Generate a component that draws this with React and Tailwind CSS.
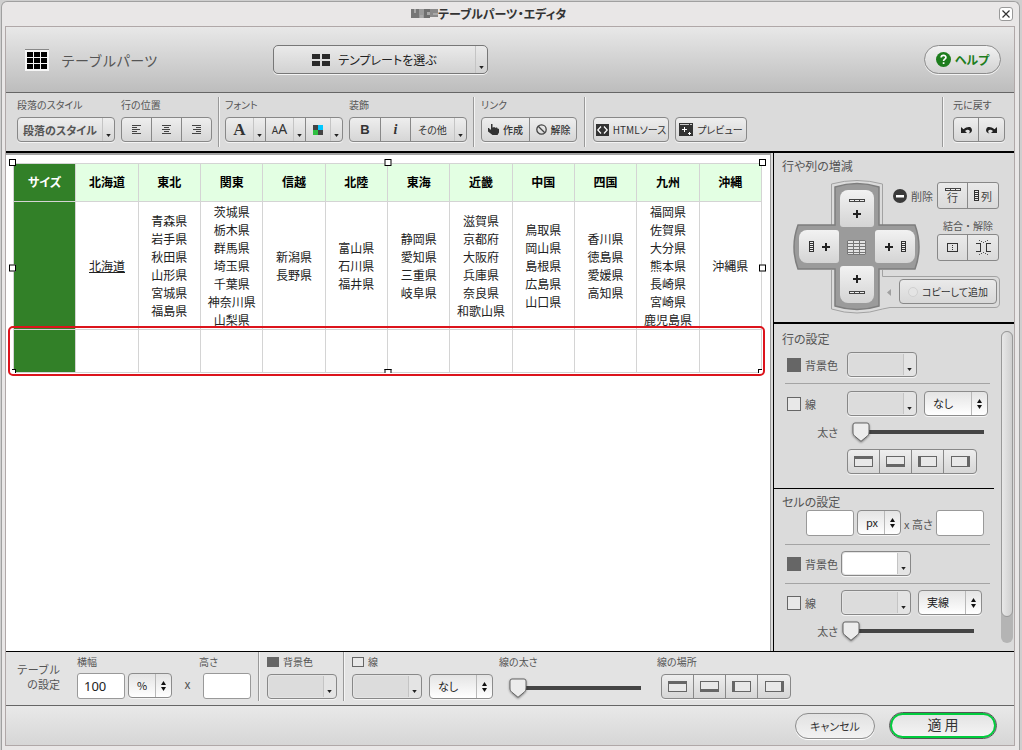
import { useState } from "react";

const regions = [
  { name: "北海道", prefs: ["北海道"], link: true },
  { name: "東北", prefs: ["青森県", "岩手県", "秋田県", "山形県", "宮城県", "福島県"] },
  { name: "関東", prefs: ["茨城県", "栃木県", "群馬県", "埼玉県", "千葉県", "神奈川県", "山梨県"] },
  { name: "信越", prefs: ["新潟県", "長野県"] },
  { name: "北陸", prefs: ["富山県", "石川県", "福井県"] },
  { name: "東海", prefs: ["静岡県", "愛知県", "三重県", "岐阜県"] },
  { name: "近畿", prefs: ["滋賀県", "京都府", "大阪府", "兵庫県", "奈良県", "和歌山県"] },
  { name: "中国", prefs: ["鳥取県", "岡山県", "島根県", "広島県", "山口県"] },
  { name: "四国", prefs: ["香川県", "徳島県", "愛媛県", "高知県"] },
  { name: "九州", prefs: ["福岡県", "佐賀県", "大分県", "熊本県", "長崎県", "宮崎県", "鹿児島県"] },
  { name: "沖縄", prefs: ["沖縄県"] },
];

const handles = [
  "size-[7px] -left-1 -top-1",
  "size-[7px] left-1/2 -top-1 -translate-x-1/2",
  "size-[7px] -right-1 -top-1",
  "size-[7px] -left-1 top-1/2 -translate-y-1/2",
  "size-[7px] -right-1 top-1/2 -translate-y-1/2",
  "size-1 border-b-0 border-l-0 -left-px bottom-0",
  "h-1 w-[7px] border-b-0 left-1/2 bottom-0 -translate-x-1/2",
  "size-1 border-b-0 border-r-0 right-0 bottom-0",
];

function Caret() {
  return (
    <svg className="mb-1" width="5" height="3" viewBox="0 0 6 4" aria-hidden="true">
      <path d="M0 0h6L3 4z" fill="#222" />
    </svg>
  );
}

function CaretCell() {
  return (
    <span className="flex w-3 items-end justify-center self-stretch border-l border-[#c4c4c4]">
      <Caret />
    </span>
  );
}

function Group({ children }) {
  return (
    <div className="flex h-[25px] w-max divide-x divide-[#888] overflow-hidden rounded-[4px] border border-[#888] bg-linear-to-b from-[#eeeeee] to-[#d6d6d6] text-[#333] shadow-[0_1px_0_#f4f4f4]">
      {children}
    </div>
  );
}

function Cell({ label, width, caret, children }) {
  return (
    <button type="button" aria-label={label} className={`flex items-center ${width}`}>
      <span className="flex flex-1 items-center justify-center gap-1 whitespace-nowrap">{children}</span>
      {caret && <CaretCell />}
    </button>
  );
}

function Tool({ label, className = "", children }) {
  return (
    <div className={`flex flex-col gap-1 ${className}`}>
      <span className="h-4 text-[10px] leading-4 whitespace-nowrap text-[#555]">{label}</span>
      {children}
    </div>
  );
}

function Divider() {
  return <div className="w-px self-stretch bg-[#999] shadow-[1px_0_0_#f4f4f4]" />;
}

function AlignIcon({ kind }) {
  const widths = [9, 5, 8, 5, 9];
  return (
    <svg width="9" height="10" viewBox="0 0 9 10" shapeRendering="crispEdges" aria-hidden="true">
      {widths.map((w, i) => {
        const x = kind === "left" ? 0 : kind === "right" ? 9 - w : Math.floor((9 - w) / 2);
        return <rect key={i} x={x} y={i * 2} width={w} height="1" fill="#444" />;
      })}
    </svg>
  );
}

function Swatch({ label, color = "bg-[#dcdcdc]" }) {
  return (
    <button
      type="button"
      aria-label={label}
      className="flex h-[25px] w-[70px] shrink-0 overflow-hidden rounded-[4px] border border-[#888] bg-[#e4e4e4] p-px shadow-[0_1px_0_#f4f4f4]"
    >
      <span className={`flex-1 self-stretch rounded-l-[3px] ${color}`} />
      <CaretCell />
    </button>
  );
}

function Picker({ label, options, width }) {
  return (
    <div className={`relative h-[25px] shrink-0 ${width}`}>
      <select
        aria-label={label}
        className="block h-full w-full appearance-none rounded-[4px] border border-[#8c8c8c] bg-linear-to-b from-[#e4e4e4] to-[#ffffff] pb-0.5 pl-2 text-[11px] leading-4 text-[#222] shadow-[0_1px_0_#f4f4f4]"
      >
        {options.map((o) => (
          <option key={o}>{o}</option>
        ))}
      </select>
      <span className="pointer-events-none absolute inset-y-px right-px flex w-4 items-center justify-center border-l border-[#b8b8b8]">
        <svg width="5" height="10" viewBox="0 0 5 10" aria-hidden="true">
          <path d="M2.500 0l2.500 4H0zM0 6h5L2.500 10z" fill="#111" />
        </svg>
      </span>
    </div>
  );
}

function Slider({ label }) {
  const [value, setValue] = useState(0);
  return (
    <div className="relative h-5 w-[132px] shrink-0">
      <input
        type="range"
        aria-label={label}
        min="0"
        max="100"
        value={value}
        onChange={(e) => setValue(Number(e.target.value))}
        className="block h-5 w-full appearance-none bg-linear-to-b from-[#444] to-[#444] bg-[length:calc(100%-8px)_4px] bg-right bg-no-repeat [&::-webkit-slider-thumb]:h-5 [&::-webkit-slider-thumb]:w-4 [&::-webkit-slider-thumb]:appearance-none [&::-webkit-slider-thumb]:bg-transparent"
      />
      <svg
        className="pointer-events-none absolute top-0 drop-shadow-[0_1px_1px_rgba(0,0,0,0.45)]"
        style={{ left: `${value * 1.14}px` }}
        width="18"
        height="20"
        viewBox="0 0 18 20"
        aria-hidden="true"
      >
        <path d="M3 1h12a2 2 0 0 1 2 2v7c0 2-.6 3-2 4.300L9 19.300l-6-5C1.600 13 1 12 1 10V3a2 2 0 0 1 2-2z" fill="#ececec" stroke="#666" />
      </svg>
    </div>
  );
}

function EdgeIcon({ side }) {
  const bars = {
    上: [0, 0, 19, 3],
    下: [0, 8, 19, 3],
    左: [0, 0, 3, 11],
    右: [16, 0, 3, 11],
  };
  const [x, y, w, h] = bars[side];
  return (
    <svg width="19" height="11" viewBox="0 0 19 11" shapeRendering="crispEdges" aria-hidden="true">
      <rect x="0.5" y="0.5" width="18" height="10" fill="#e8e8e8" stroke="#666" />
      <rect x={x} y={y} width={w} height={h} fill="#666" />
    </svg>
  );
}

function EdgeButtons() {
  return (
    <Group>
      {["上", "下", "左", "右"].map((side) => (
        <Cell key={side} label={`${side}の線`} width="w-8">
          <EdgeIcon side={side} />
        </Cell>
      ))}
    </Group>
  );
}

function Check({ label, on, small }) {
  return (
    <label className="flex items-center gap-1 text-[11px] leading-4 whitespace-nowrap text-[#555]">
      <input
        type="checkbox"
        defaultChecked={on}
        className={`appearance-none border border-[#666] bg-[#e8e8e8] checked:bg-[#666] ${small ? "h-2.5 w-3" : "size-3.5"}`}
      />
      <span className={small ? "text-[10px]" : ""}>{label}</span>
    </label>
  );
}

function SizeInput({ label, value = "" }) {
  return (
    <input
      type="text"
      aria-label={label}
      defaultValue={value}
      className="h-[26px] w-12 shrink-0 rounded-[3px] border border-[#999] bg-white px-1.5 font-['Noto_Sans',sans-serif] text-[13px] text-[#222]"
    />
  );
}

function TitleBar() {
  return (
    <div className="grid h-6 grid-cols-[10fr_auto_11fr] items-center pr-0.5">
      <span />
      <h1 className="flex items-center text-[12px] leading-4 font-bold text-[#333]">
        <svg width="27" height="11" viewBox="0 0 27 11" shapeRendering="crispEdges" aria-hidden="true">
          <path d="M0 0h8v9H0z" fill="#777" />
          <path d="M8 0h5v9H8z" fill="#9a9a9a" />
          <path d="M13 0h6v9h-6z" fill="#6f6f6f" />
          <path d="M19 0h8v8h-8z" fill="#8a8a8a" />
          <path d="M3 0h2v4H3zM9 6h3v3H9zM16 3h3v3h-3zM22 4h5v2h-5z" fill="#a8a8a8" />
        </svg>
        テーブルパーツ・エディタ
      </h1>
      <button type="button" aria-label="閉じる" className="flex size-3.5 items-center justify-center justify-self-end rounded-[3px] border border-[#999] bg-white">
        <svg width="8" height="8" viewBox="0 0 8 8" aria-hidden="true">
          <path d="M0.500 0.500l7 7M7.500 0.500l-7 7" stroke="#333" strokeWidth="1.200" />
        </svg>
      </button>
    </div>
  );
}

function Header() {
  return (
    <header className="flex h-[66px] items-center border-b border-[#666] bg-linear-to-b from-[#e8e8e8] to-[#bdbdbd] pr-[13px] pl-[19px]">
      <div className="flex w-[248px] items-center gap-3">
        <svg width="24" height="22" viewBox="0 0 24 22" shapeRendering="crispEdges" aria-hidden="true">
          <path d="M0 0h24v22H0z" fill="#f6f6f6" />
          <path d="M0 0h24v1H0z" fill="#888" />
          <path d="M2 3h20v17H2z" fill="#000" />
          <path d="M8 3h1v17H8zM15 3h1v17h-1zM2 8h20v1H2zM2 14h20v1H2z" fill="#f6f6f6" />
        </svg>
        <h2 className="text-[14px] leading-5 whitespace-nowrap text-[#555] [font-feature-settings:normal]">テーブルパーツ</h2>
      </div>
      <button
        type="button"
        className="flex h-[29px] w-[215px] items-center rounded-[5px] border border-[#777] bg-linear-to-b from-[#eaeaea] to-[#d2d2d2] shadow-[0_1px_0_#f4f4f4]"
      >
        <span className="flex flex-1 items-center justify-center gap-2 text-[12px] leading-4 text-[#222]">
          <svg width="18" height="12" viewBox="0 0 18 12" shapeRendering="crispEdges" aria-hidden="true">
            <path d="M0 0h8v5H0zM10 0h8v5h-8zM0 7h8v5H0zM10 7h8v5h-8z" fill="#2a2a2a" />
          </svg>
          テンプレートを選ぶ
        </span>
        <CaretCell />
      </button>
      <button
        type="button"
        className="ml-auto flex h-[29px] w-[77px] items-center justify-center gap-1 rounded-full border border-[#8c8c8c] bg-linear-to-b from-[#f2f2f2] to-[#d2d2d2] text-[12px] leading-4 font-bold text-[#1d7d1d] shadow-[0_1px_0_#f4f4f4]"
      >
        <svg width="15" height="15" viewBox="0 0 15 15" aria-hidden="true">
          <circle cx="7.500" cy="7.500" r="7.500" fill="#1d7d1d" />
          <path d="M5.200 5.600c0-3 4.700-3 4.700-.2 0 1.700-2.300 1.700-2.300 3.500M7.600 10.200v1.700" fill="none" stroke="#fff" strokeWidth="1.700" />
        </svg>
        ヘルプ
      </button>
    </header>
  );
}

function Toolbar() {
  return (
    <div className="flex h-[60px] border-b-2 border-black bg-[#dbdbdb] pt-1 pr-[9px] pb-1 pl-[11px] text-[11px] leading-4">
      <div className="flex flex-1 gap-1.5">
        <Tool label="段落のスタイル">
          <Group>
            <Cell width="w-24 font-bold text-[#555]" caret>段落のスタイル</Cell>
          </Group>
        </Tool>
        <Tool label="行の位置">
          <Group>
            <Cell label="左揃え" width="w-[30px]"><AlignIcon kind="left" /></Cell>
            <Cell label="中央揃え" width="w-[30px]"><AlignIcon kind="center" /></Cell>
            <Cell label="右揃え" width="w-[29px]"><AlignIcon kind="right" /></Cell>
          </Group>
        </Tool>
        <Divider />
        <Tool label="フォント">
          <Group>
            <Cell label="書体" width="w-10" caret>
              <span className="font-['Liberation_Serif',serif] text-[17px] font-bold">A</span>
            </Cell>
            <Cell label="文字サイズ" width="w-10" caret>
              <span className="font-['Noto_Sans',sans-serif] text-[10px] leading-4">
                A<span className="text-[14px]">A</span>
              </span>
            </Cell>
            <Cell label="文字色" width="w-[36px]" caret>
              <svg width="10" height="10" viewBox="0 0 10 10" shapeRendering="crispEdges" aria-hidden="true">
                <path d="M0 0h10v10H0z" fill="#444" />
                <path d="M5 0h5v5H5z" fill="#00c8ff" />
                <path d="M0 5h5v5H0z" fill="#2fc040" />
              </svg>
            </Cell>
          </Group>
        </Tool>
        <Tool label="装飾">
          <Group>
            <Cell label="太字" width="w-[31px]">
              <span className="font-['Liberation_Sans',sans-serif] text-[13px] font-bold">B</span>
            </Cell>
            <Cell label="斜体" width="w-[30px]">
              <span className="font-['Liberation_Serif',serif] text-[14px] font-bold italic">i</span>
            </Cell>
            <Cell width="w-[55px] text-[10px]" caret>その他</Cell>
          </Group>
        </Tool>
        <Divider />
        <Tool label="リンク" className="px-px">
          <Group>
            <Cell width="w-12 text-[10px] font-medium">
              <svg width="11" height="11" viewBox="0 0 11 11" aria-hidden="true">
                <path d="M3 0h1.500v3.500h1V3h1.200v.8H8V3.500h1.200v.8L11 5v3.500L9.500 11H4.500L0 7.500V4l1 0 1 1.500h1z" fill="#333" />
              </svg>
              作成
            </Cell>
            <Cell width="w-[46px] text-[10px] font-medium">
              <svg width="11" height="11" viewBox="0 0 11 11" fill="none" stroke="#444" strokeWidth="1.300" aria-hidden="true">
                <circle cx="5.500" cy="5.500" r="4.700" />
                <path d="M2.200 2.200l6.600 6.600" />
              </svg>
              解除
            </Cell>
          </Group>
        </Tool>
        <Divider />
        <div className="flex gap-1.5 pt-5 pl-0.5">
          <Group>
            <Cell width="w-[74px] text-[10px]">
              <svg width="13" height="12" viewBox="0 0 13 12" aria-hidden="true">
                <path d="M0 0h13v12H0z" fill="#333" />
                <path d="M5 2.500L1.800 6 5 9.500M8 2.500L11.200 6 8 9.500" fill="none" stroke="#fff" strokeWidth="1.200" />
              </svg>
              HTMLソース
            </Cell>
          </Group>
          <Group>
            <Cell width="w-[70px] text-[10px]">
              <svg width="14" height="13" viewBox="0 0 14 13" shapeRendering="crispEdges" aria-hidden="true">
                <path d="M0 0h14v13H0z" fill="#333" />
                <path d="M1 1h9v1H1zM11 1h2v1h-2z" fill="#ccc" />
                <path d="M3 6h5v1H3zM5 4h1v5H5zM9 10h3v1H9zM10 9h1v3h-1z" fill="#fff" />
              </svg>
              プレビュー
            </Cell>
          </Group>
        </div>
      </div>
      <div className="flex gap-2.5">
        <Divider />
        <Tool label="元に戻す">
          <Group>
            <Cell label="元に戻す" width="w-[25px]">
              <svg width="11" height="8" viewBox="0 0 11 8" aria-hidden="true">
                <path d="M0 1v6h6L4 5c2-2 4-1.500 4.500-.5S9 6.500 7.500 7.500C11 7 11.500 4.500 10.500 2.500S6 .5 2.500 3.300z" fill="#222" />
              </svg>
            </Cell>
            <Cell label="やり直す" width="w-[25px]">
              <svg width="11" height="8" viewBox="0 0 11 8" aria-hidden="true">
                <path d="M11 1v6H5l2-2C5 3 3 3.500 2.500 4.500S2 6.500 3.500 7.500C0 7-.5 4.500.5 2.500S5 .5 8.500 3.300z" fill="#222" />
              </svg>
            </Cell>
          </Group>
        </Tool>
      </div>
    </div>
  );
}

function Canvas() {
  return (
    <div className="min-w-0 flex-1 border-t-2 border-r border-t-[#a4a4a4] border-r-[#999] bg-white pt-2 pr-2 pl-[7px]">
      <div className="relative">
        <table className="w-full table-fixed border-collapse text-center text-[12px] leading-[18px] text-[#222]">
          <thead>
            <tr className="h-[38px]">
              <th className="border border-[#d4d4d4] bg-[#328028] pb-0.5 text-white">サイズ</th>
              {regions.map((r) => (
                <th key={r.name} className="border border-[#d4d4d4] bg-[#e3ffe3] pb-0.5 text-black">{r.name}</th>
              ))}
            </tr>
          </thead>
          <tbody>
            <tr className="h-[128px]">
              <td className="border border-[#d4d4d4] bg-[#328028]" />
              {regions.map((r) => (
                <td key={r.name} className="border border-[#d4d4d4] p-0">
                  {r.link ? (
                    <a href="#hokkaido" className="underline">{r.prefs[0]}</a>
                  ) : (
                    r.prefs.map((p) => <div key={p} className="whitespace-nowrap">{p}</div>)
                  )}
                </td>
              ))}
            </tr>
            <tr className="h-[43px]">
              <td className="border border-[#d4d4d4] bg-[#328028]" />
              {regions.map((r) => (
                <td key={r.name} className="border border-[#d4d4d4]" />
              ))}
            </tr>
          </tbody>
        </table>
        {handles.map((pos) => (
          <span key={pos} className={`absolute border border-black bg-white ${pos}`} />
        ))}
        <div className="absolute -right-[3px] -bottom-[3px] -left-[5px] h-[50px] rounded-[5px] border-2 border-[#dc141c]" />
      </div>
    </div>
  );
}

const armButton = "flex items-center justify-center bg-linear-to-b from-[#f2f2f2] to-[#d4d4d4]";

function Plus() {
  return (
    <svg width="8" height="8" viewBox="0 0 8 8" shapeRendering="crispEdges" aria-hidden="true">
      <path d="M3 0h2v3h3v2H5v3H3V5H0V3h3z" fill="#222" />
    </svg>
  );
}

function RowBar() {
  return (
    <svg width="16" height="3" viewBox="0 0 16 3" shapeRendering="crispEdges" aria-hidden="true">
      <path d="M0 0h16v3H0z" fill="#444" />
      <path d="M1 1h4v1H1zM6 1h4v1H6zM11 1h4v1h-4z" fill="#eee" />
    </svg>
  );
}

function ColBar() {
  return (
    <svg width="5" height="11" viewBox="0 0 5 11" shapeRendering="crispEdges" aria-hidden="true">
      <path d="M0 0h5v11H0z" fill="#333" />
      <path d="M1 1h3v1H1zM1 3h3v1H1zM1 5h3v1H1zM1 7h3v1H1zM1 9h3v1H1z" fill="#eee" />
    </svg>
  );
}

function PairButtons({ first, second }) {
  return (
    <div className="flex h-[27px] divide-x divide-[#888] rounded-[3px] border border-[#888] bg-linear-to-b from-[#eaeaea] to-[#dadada] text-[#444]">
      <button type="button" className="flex w-[30px] items-center justify-center">{first}</button>
      <button type="button" className="flex w-[30px] items-center justify-center gap-0.5">{second}</button>
    </div>
  );
}

function RowColSection() {
  return (
    <section className="border-b-2 border-black pt-[5px] pb-2">
      <h3 className="pl-2 text-[12px] leading-4 text-[#555]">行や列の増減</h3>
      <div className="relative mt-[5px] ml-[19px] flex h-[135px] w-[208px]">
        <svg className="absolute inset-0" width="208" height="135" viewBox="0 0 208 135" aria-hidden="true">
          <path
            d="M38.500 5Q64 -2 89.500 5V46M89.500 91V97.500H202Q206.500 97.500 206.500 102V124Q206.500 128.500 202 128.500H97L89.500 130Q64 138 38.500 130V91M38.500 46V5"
            fill="none"
            stroke="#a2a2a2"
          />
          <path
            d="M42 8Q64 1 86 8V46H122Q130 68 122 90H86V127Q64 134 42 127V90H5Q-3 68 5 46H42z"
            fill="#9b9b9b"
            stroke="#7e7e7e"
            strokeWidth="1.500"
          />
          <path d="M54 61h19v15H54z" fill="#e4e4e4" />
          <path d="M54.500 61.500h18v14h-18zM54 64.500h19M54 67.500h19M54 70.500h19M54 73.500h19M60.500 61v15M66.500 61v15" fill="none" stroke="#777" />
          <path d="M98 110v7l-4-3.500z" fill="#a0a0a0" />
        </svg>
        <div className="relative grid h-max shrink-0 grid-cols-[40px_34px_40px] grid-rows-[37px_33px_37px] gap-x-px gap-y-[3px] pt-[11px] pl-1.5">
          <button type="button" aria-label="上に行を追加" className={`col-start-2 flex-col gap-2 rounded-t-[8px] rounded-b-[3px] ${armButton}`}>
            <RowBar />
            <Plus />
          </button>
          <button type="button" aria-label="左に列を追加" className={`col-start-1 row-start-2 gap-2 rounded-l-[8px] rounded-r-[3px] ${armButton}`}>
            <ColBar />
            <Plus />
          </button>
          <button type="button" aria-label="右に列を追加" className={`col-start-3 row-start-2 gap-2 rounded-l-[3px] rounded-r-[8px] ${armButton}`}>
            <Plus />
            <ColBar />
          </button>
          <button type="button" aria-label="下に行を追加" className={`col-start-2 row-start-3 flex-col gap-2 rounded-t-[3px] rounded-b-[8px] ${armButton}`}>
            <Plus />
            <RowBar />
          </button>
        </div>
        <div className="relative flex min-w-0 flex-1 flex-col items-end pt-[3px] pr-0.5 text-[11px] leading-4 whitespace-nowrap text-[#555]">
          <div className="flex h-[27px] items-center gap-1">
            <svg width="14" height="14" viewBox="0 0 14 14" aria-hidden="true">
              <circle cx="7" cy="7" r="7" fill="#3a3a3a" />
              <path d="M3 6h8v2.500H3z" fill="#fff" />
            </svg>
            <span>削除</span>
            <PairButtons
              first={
                <span className="flex flex-col items-center text-[11px] leading-3">
                  <RowBar />
                  行
                </span>
              }
              second={
                <>
                  <ColBar />
                  列
                </>
              }
            />
          </div>
          <span className="mt-2 pr-1.5 text-[10px] leading-[17px] [font-feature-settings:normal]">結合・解除</span>
          <PairButtons
            first={
              <svg width="11" height="9" viewBox="0 0 11 9" shapeRendering="crispEdges" role="img" aria-label="結合">
                <path d="M0.500 0.500h10v8h-10z" fill="none" stroke="#333" />
                <path d="M5 2h1v1H5zM5 4h1v1H5zM5 6h1v1H5z" fill="#333" />
              </svg>
            }
            second={
              <svg width="17" height="15" viewBox="0 0 17 15" shapeRendering="crispEdges" fill="none" stroke="#333" role="img" aria-label="解除">
                <path d="M1 3.500h4.500v8H1M16 3.500h-4.500v8H16" />
                <path d="M4 0h1v1H4zM6 1h1v1H6zM8 2h1v1H8zM12 0h1v1h-1zM10 1h1v1h-1zM4 14h1v1H4zM6 13h1v1H6zM8 12h1v1H8zM12 14h1v1h-1zM10 13h1v1h-1z" fill="#555" stroke="none" />
              </svg>
            }
          />
          <button
            type="button"
            className="mt-[18px] mr-0.5 flex h-[25px] w-[98px] shrink-0 items-center justify-center gap-1 rounded-[4px] border border-[#888] bg-linear-to-b from-[#eaeaea] to-[#d8d8d8] text-[10px] text-[#333]"
          >
            <span className="size-2.5 rounded-full border border-[#d0d0d0] bg-[#e4e4e4]" />
            コピーして追加
          </button>
        </div>
      </div>
    </section>
  );
}

function Rule({ className }) {
  return <hr className={`mr-1 ml-[11px] border-[#a4a4a4] ${className}`} />;
}

function SidePanel() {
  return (
    <aside className="ml-0.5 flex w-[241px] shrink-0 flex-col border-l border-black bg-[#dbdbdb] text-[#555]">
      <RowColSection />
      <div className="flex flex-1 gap-[7px]">
        <div className="w-[220px]">
          <section className="border-b border-black pt-[7px] pb-3.5">
            <h3 className="mb-[5px] pl-2 text-[12px] leading-4">行の設定</h3>
            <div className="grid grid-cols-[60px_auto] items-center pl-[13px]">
              <Check label="背景色" on />
              <Swatch label="行の背景色" />
            </div>
            <Rule className="mt-1.5 mb-[7px]" />
            <div className="grid grid-cols-[60px_77px_auto] items-center pl-[13px]">
              <Check label="線" />
              <Swatch label="行の線の色" />
              <Picker label="行の線の種類" options={["なし", "実線", "点線"]} width="w-16" />
            </div>
            <div className="mt-1.5 flex items-center justify-end gap-3.5 pr-2.5 text-[11px] leading-4">
              <span>太さ</span>
              <Slider label="行の線の太さ" />
            </div>
            <div className="mt-[7px] pl-[73px]">
              <EdgeButtons />
            </div>
          </section>
          <section className="pt-[5px]">
            <h3 className="pl-2 text-[12px] leading-4">セルの設定</h3>
            <div className="flex items-start gap-[3px] pl-8 text-[11px] leading-6 whitespace-nowrap">
              <SizeInput label="セルの幅" />
              <Picker label="セルの幅の単位" options={["px", "%"]} width="w-11" />
              <span className="pt-0.5">x 高さ</span>
              <SizeInput label="セルの高さ" />
            </div>
            <Rule className="mt-2 mb-1.5" />
            <div className="grid grid-cols-[54px_auto] items-center pl-[13px]">
              <Check label="背景色" on />
              <Swatch label="セルの背景色" color="bg-white" />
            </div>
            <Rule className="mt-[7px] mb-1.5" />
            <div className="grid grid-cols-[54px_77px_auto] items-center pl-[13px]">
              <Check label="線" />
              <Swatch label="セルの線の色" />
              <Picker label="セルの線の種類" options={["実線", "点線", "なし"]} width="w-16" />
            </div>
            <div className="mt-1.5 flex items-center justify-end gap-1 pr-5 text-[11px] leading-4">
              <span>太さ</span>
              <Slider label="セルの線の太さ" />
            </div>
          </section>
        </div>
        <div className="mt-[7px] mb-2 flex w-3 flex-col rounded-full bg-[#b4b4b4]">
          <div className="h-[286px] rounded-full border border-[#999] bg-linear-to-r from-[#e8e8e8] to-[#cfcfcf]" />
        </div>
      </div>
    </aside>
  );
}

function TableSettings() {
  return (
    <div className="flex h-[55px] border-t border-b border-t-black border-b-[#666] bg-[#e3e3e3] pb-1 pl-2.5 text-[10px] leading-4 whitespace-nowrap text-[#555]">
      <h3 className="w-11 pt-2.5 text-right text-[11px] leading-[15px] [font-feature-settings:normal]">
        テーブル
        <br />
        の設定
      </h3>
      <div className="ml-[17px] flex flex-col gap-[3px] pt-0.5">
        <span>横幅</span>
        <div className="flex gap-[3px]">
          <SizeInput label="横幅" value="100" />
          <Picker label="横幅の単位" options={["%", "px"]} width="w-11" />
        </div>
      </div>
      <span className="w-[31px] pt-6 text-center text-[12px]">x</span>
      <div className="mr-[7px] flex flex-col gap-[3px] pt-0.5">
        <span className="-ml-1">高さ</span>
        <SizeInput label="高さ" />
      </div>
      <Divider />
      <div className="mr-1.5 ml-2 flex flex-col gap-1 pt-0.5">
        <Check label="背景色" on small />
        <Swatch label="テーブルの背景色" />
      </div>
      <Divider />
      <div className="ml-2 flex flex-col gap-1 pt-0.5">
        <Check label="線" small />
        <div className="flex gap-[7px]">
          <Swatch label="テーブルの線の色" />
          <Picker label="テーブルの線の種類" options={["なし", "実線", "点線"]} width="w-16" />
        </div>
      </div>
      <div className="ml-1.5 flex flex-col gap-2 pt-0.5">
        <span>線の太さ</span>
        <div className="pl-2.5">
          <Slider label="テーブルの線の太さ" />
        </div>
      </div>
      <div className="ml-4 flex flex-col gap-1 pt-0.5">
        <span>線の場所</span>
        <div className="pl-1">
          <EdgeButtons />
        </div>
      </div>
    </div>
  );
}

function Footer() {
  return (
    <footer className="flex h-[39px] items-center justify-end gap-3.5 bg-linear-to-b from-[#e9e9e9] to-[#d6d6d6] pr-[17px] text-[#333]">
      <button
        type="button"
        className="h-[26px] w-20 rounded-full border border-[#8c8c8c] bg-linear-to-b from-[#e2e2e2] to-[#f2f2f2] text-[11px] leading-4 shadow-[0_1px_0_#fff]"
      >
        キャンセル
      </button>
      <button
        type="button"
        className="h-[27px] w-[108px] rounded-full border border-[#555] bg-linear-to-b from-[#e2e2e2] to-[#f6f6f6] pb-1 text-[14px] leading-4 shadow-[inset_0_0_0_2px_#00cc3d]"
      >
        適 用
      </button>
    </footer>
  );
}

export default function App() {
  return (
    <div className="flex min-h-screen flex-col bg-[#cfcfcf] pt-px pr-0.5 pl-px font-['Noto_Sans_CJK_JP',sans-serif] [font-feature-settings:'palt']">
      <div className="flex flex-1 flex-col rounded-t-[6px] border border-b-0 border-[#a0a0a0] bg-[#e9e7e7] pr-1 pb-1 pl-[3px]">
        <TitleBar />
        <div className="flex flex-1 flex-col border border-[#b0a8a8]">
          <Header />
          <Toolbar />
          <main className="flex flex-1 bg-[#dbdbdb]">
            <Canvas />
            <SidePanel />
          </main>
          <TableSettings />
          <Footer />
        </div>
      </div>
    </div>
  );
}
